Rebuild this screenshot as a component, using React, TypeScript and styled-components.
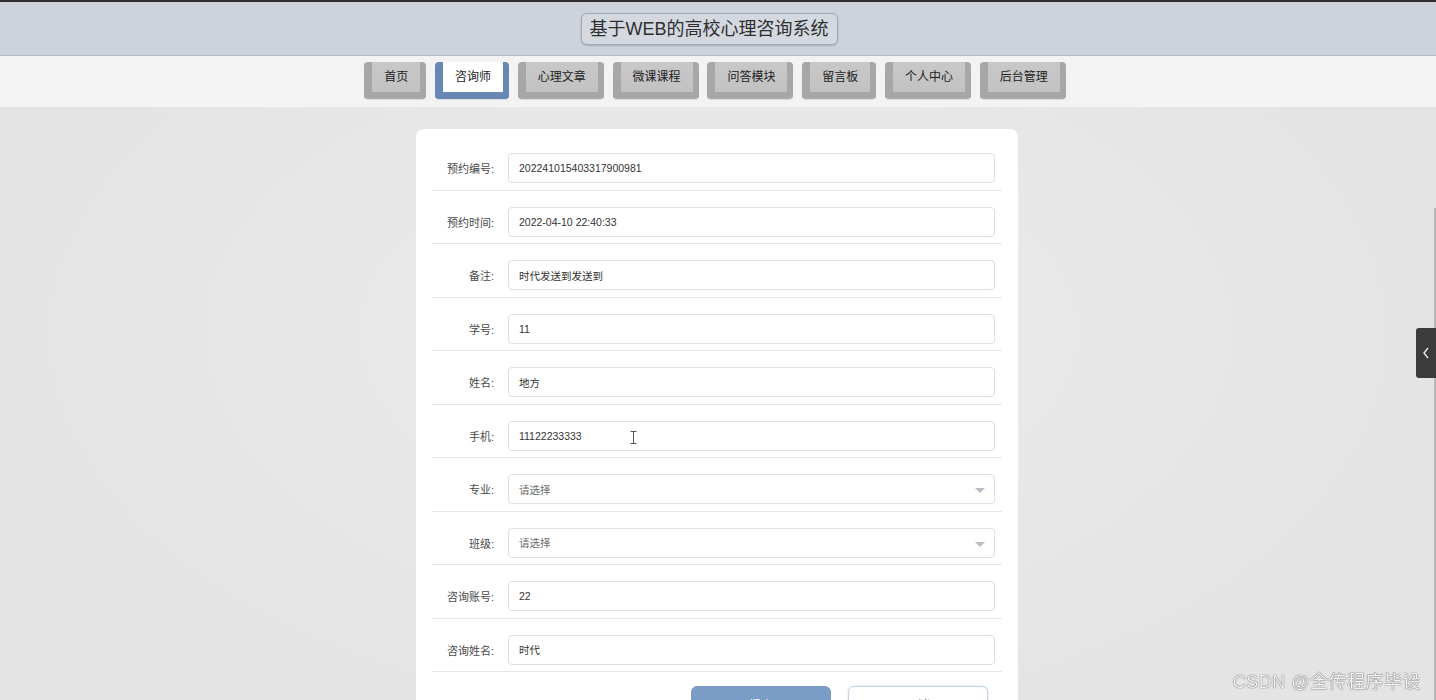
import styled, { createGlobalStyle, css } from 'styled-components';

const GlobalStyle = createGlobalStyle`
  html, body {
    margin: 0;
    padding: 0;
    overflow: hidden;
    height: 100%;
  }
  body {
    font-family: "Liberation Sans", "Noto Sans CJK SC", sans-serif;
    background: #e6e6e6;
  }
  * {
    box-sizing: border-box;
  }
`;

type Field = {
  label: string;
  value: string;
  select?: boolean;
  caret?: boolean;
};

const NAV_ITEMS = ['首页', '咨询师', '心理文章', '微课课程', '问答模块', '留言板', '个人中心', '后台管理'];
const ACTIVE_NAV = '咨询师';

const FIELDS: Field[] = [
  { label: '预约编号', value: '202241015403317900981' },
  { label: '预约时间', value: '2022-04-10 22:40:33' },
  { label: '备注', value: '时代发送到发送到' },
  { label: '学号', value: '11' },
  { label: '姓名', value: '地方' },
  { label: '手机', value: '11122233333', caret: true },
  { label: '专业', value: '请选择', select: true },
  { label: '班级', value: '请选择', select: true },
  { label: '咨询账号', value: '22' },
  { label: '咨询姓名', value: '时代' },
];

const Page = styled.div`
  min-height: 100vh;
  display: flex;
  flex-direction: column;
  background: radial-gradient(ellipse at 50% 45%, #ececec 0%, #e4e4e4 70%);
`;

const Header = styled.header`
  height: 56px;
  border-top: 2px solid #2e2e2e;
  background: #cdd2db;
  border-bottom: 1px solid #b3bac6;
  box-shadow: 0 1px 2px rgba(0, 0, 0, 0.12);
  display: flex;
  align-items: center;
  justify-content: center;
  padding-right: 18px;
`;

const Title = styled.h1`
  margin: 0;
  padding: 0 8px;
  height: 32px;
  line-height: 30px;
  font-size: 18px;
  font-weight: normal;
  color: #2f2f2f;
  background: #d4d8e0;
  border: 1px solid #a2a8b3;
  border-radius: 6px;
  box-shadow: 0 1px 2px rgba(0, 0, 0, 0.18);
  font-family: "Liberation Sans", "Noto Sans CJK SC", sans-serif;
`;

const NavBar = styled.nav`
  height: 51px;
  background: #f3f3f3;
  display: flex;
  justify-content: center;
  align-items: flex-start;
  padding-top: 6px;
  padding-right: 6px;
`;

const NavButton = styled.div<{ $active?: boolean }>`
  margin: 0 4.4px;
  height: 37px;
  padding: 0 12px;
  border-style: solid;
  border-width: 0 6px 7px 8px;
  border-color: #a7a7a7;
  border-radius: 4px;
  background: linear-gradient(#c8c8c8, #c2c2c2);
  color: #222;
  font-size: 12px;
  line-height: 30px;
  white-space: nowrap;
  box-shadow: 0 1px 1px rgba(0, 0, 0, 0.1);
  ${({ $active }) =>
    $active &&
    css`
      border-color: #6888b3;
      background: #fff;
    `}
`;

const Main = styled.main`
  flex: 1;
  display: flex;
  justify-content: center;
  padding-top: 22px;
  padding-right: 2px;
`;

const Card = styled.div`
  width: 602px;
  background: #fff;
  border-radius: 8px;
  padding: 8px 16px 20px;
  align-self: flex-start;
`;

const Row = styled.div`
  display: flex;
  align-items: center;
  padding: 16px 7px 6.5px 0;
  border-bottom: 1px solid #e6e6e6;
`;

const Label = styled.label`
  width: 76px;
  flex-shrink: 0;
  padding-right: 14px;
  text-align: right;
  font-size: 11px;
  color: #4a4a4a;
`;

const InputBox = styled.div<{ $placeholder?: boolean }>`
  position: relative;
  flex: 1;
  height: 30px;
  border: 1px solid #dcdfe6;
  border-radius: 4px;
  padding: 0 10px;
  display: flex;
  align-items: center;
  font-size: 10.5px;
  color: ${({ $placeholder }) => ($placeholder ? '#6a6a6a' : '#333')};
`;

const Caret = styled.span`
  position: absolute;
  right: 9px;
  top: 13px;
  width: 0;
  height: 0;
  border-left: 5px solid transparent;
  border-right: 5px solid transparent;
  border-top: 5px solid #b8bcc4;
`;

const TextCursor = styled.svg`
  position: absolute;
  left: 121px;
  top: 9px;
`;

const Actions = styled.div`
  display: flex;
  justify-content: flex-end;
  gap: 17px;
  padding: 14px 14px 0 0;
`;

const Button = styled.button<{ $primary?: boolean }>`
  width: 140px;
  height: 36px;
  border-radius: 6px;
  font-size: 12px;
  font-family: inherit;
  border: 1px solid ${({ $primary }) => ($primary ? '#7a9cc6' : '#c5d4e7')};
  background: ${({ $primary }) => ($primary ? '#7a9cc6' : '#fff')};
  color: ${({ $primary }) => ($primary ? '#fff' : '#555')};
  box-shadow: ${({ $primary }) => ($primary ? 'none' : '0 0 2px rgba(120,150,200,0.4)')};
`;

const SideTab = styled.div`
  position: fixed;
  right: 0;
  top: 328px;
  width: 20px;
  height: 50px;
  background: #3b3b3b;
  border-radius: 3px 0 0 3px;
  display: flex;
  align-items: center;
  justify-content: center;
`;

const ScrollEdge = styled.div`
  position: fixed;
  right: 0;
  top: 208px;
  bottom: 0;
  width: 2px;
  background: #b9b9b9;
`;

const Watermark = styled.div`
  position: fixed;
  right: 15px;
  bottom: 7px;
  font-size: 18px;
  color: #f2f2f2;
  letter-spacing: 0.5px;
  text-shadow: 0 0 1px #5e5e5e, 0 0 1px #5e5e5e;
  font-family: "Liberation Sans", "Noto Sans CJK SC", sans-serif;
`;

export default function App() {
  return (
    <>
      <GlobalStyle />
      <Page>
        <Header>
          <Title>基于WEB的高校心理咨询系统</Title>
        </Header>
        <NavBar>
          {NAV_ITEMS.map((item) => (
            <NavButton key={item} $active={item === ACTIVE_NAV}>
              {item}
            </NavButton>
          ))}
        </NavBar>
        <Main>
          <Card>
            {FIELDS.map((field) => (
              <Row key={field.label}>
                <Label>{field.label}:</Label>
                <InputBox $placeholder={field.select}>
                  {field.value}
                  {field.select && <Caret />}
                  {field.caret && (
                    <TextCursor width="7" height="13" viewBox="0 0 7 13">
                      <path d="M0.5 0.5h6M3.5 0.5v12M0.5 12.5h6" stroke="#555" strokeWidth="1" fill="none" />
                    </TextCursor>
                  )}
                </InputBox>
              </Row>
            ))}
            <Actions>
              <Button $primary>提交</Button>
              <Button>取消</Button>
            </Actions>
          </Card>
        </Main>
        <ScrollEdge />
        <SideTab>
          <svg width="8" height="12" viewBox="0 0 8 12">
            <path d="M6 1L2 6l4 5" stroke="#e8e8e8" strokeWidth="1.4" fill="none" />
          </svg>
        </SideTab>
        <Watermark>CSDN @全传程序毕设</Watermark>
      </Page>
    </>
  );
}
